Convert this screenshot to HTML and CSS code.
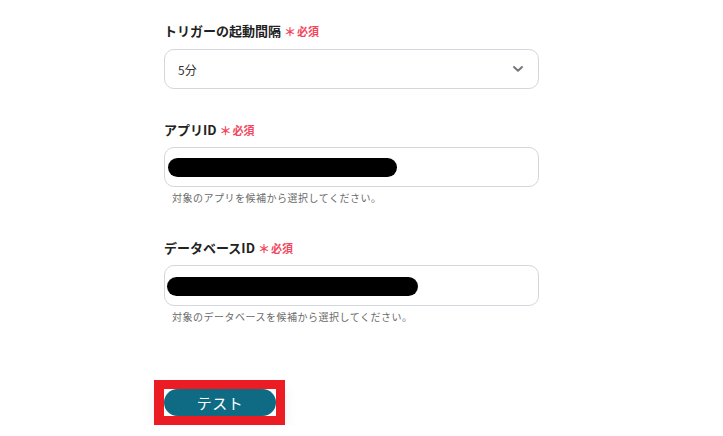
FILE: index.html
```html
<!DOCTYPE html>
<html lang="ja">
<head>
<meta charset="utf-8">
<link rel="stylesheet" href="styles.css">
</head>
<body>
<div class="form">
  <div class="field">
    <div class="label">トリガーの起動間隔<span class="req"><span class="ast">＊</span>必須</span></div>
    <div class="control select">
      <span class="value">5分</span>
      <svg class="chev" width="12" height="8" viewBox="0 0 12 8"><path d="M2 2 L6 5.8 L10 2" fill="none" stroke="#757575" stroke-width="1.9" stroke-linecap="round" stroke-linejoin="round"/></svg>
    </div>
  </div>
  <div class="field">
    <div class="label">アプリID<span class="req"><span class="ast">＊</span>必須</span></div>
    <div class="control"><span class="mask mask-app"></span></div>
    <div class="help">対象のアプリを候補から選択してください。</div>
  </div>
  <div class="field">
    <div class="label">データベースID<span class="req"><span class="ast">＊</span>必須</span></div>
    <div class="control"><span class="mask mask-db"></span></div>
    <div class="help">対象のデータベースを候補から選択してください。</div>
  </div>
  <div class="actions">
    <div class="frame"><button class="btn">テスト</button></div>
  </div>
</div>
</body>
</html>
```

FILE: styles.css
```css
html, body {
  margin: 0;
  padding: 0;
  background: #ffffff;
}
body {
  font-family: "Noto Sans CJK JP", "Noto Sans", sans-serif;
  color: #222;
}
.form {
  width: 375px;
  margin-left: 164px;
  padding-top: 22px;
}
.field {
  display: flex;
  flex-direction: column;
}
.field + .field {
  margin-top: 32px;
}
.field:nth-child(3) {
  margin-top: 34px;
}
.label {
  font-size: 13px;
  font-weight: 700;
  line-height: 18px;
  height: 18px;
  color: #222;
  display: flex;
  align-items: center;
}
.req {
  color: #f2485e;
  font-size: 11px;
  font-weight: 700;
  margin-left: 3px;
  display: inline-flex;
  align-items: center;
}
.ast {
  font-size: 12px;
  font-weight: 700;
  margin-right: 1px;
  position: relative;
  top: 1px;
}
.control {
  margin-top: 8px;
  height: 40px;
  box-sizing: border-box;
  border: 1px solid #d3d6dc;
  border-radius: 10px;
  display: flex;
  align-items: center;
  padding: 0 3px;
}
.select {
  margin-top: 9px;
  padding: 0 14px 0 13px;
  justify-content: space-between;
}
.value {
  font-size: 12px;
  color: #333;
}
.chev {
  display: block;
}
.mask {
  display: block;
  height: 19px;
  background: #000;
  border-radius: 10px;
}
.mask-app {
  width: 229px;
}
.mask-db {
  width: 251px;
  margin-left: -1px;
  margin-top: 1px;
}
.field:nth-child(3) .control {
  height: 41px;
}
.help {
  margin-top: 4px;
  padding-left: 8px;
  font-size: 10px;
  letter-spacing: 0.5px;
  line-height: 14px;
  color: #6a6a6a;
}
.actions {
  margin-top: 56px;
  margin-left: -10px;
  display: flex;
}
.frame {
  border: 9px solid #ec1c24;
  border-left-width: 10px;
  background: #fff;
  display: flex;
  box-shadow: 0 8px 14px rgba(0, 0, 0, 0.06);
}
.btn {
  width: 112px;
  height: 27px;
  border: none;
  border-radius: 14px;
  background: #0e6b83;
  color: #fff;
  font-family: "Noto Sans CJK JP", sans-serif;
  font-size: 15px;
  line-height: 27px;
  padding: 0;
  letter-spacing: 0.5px;
}
```
